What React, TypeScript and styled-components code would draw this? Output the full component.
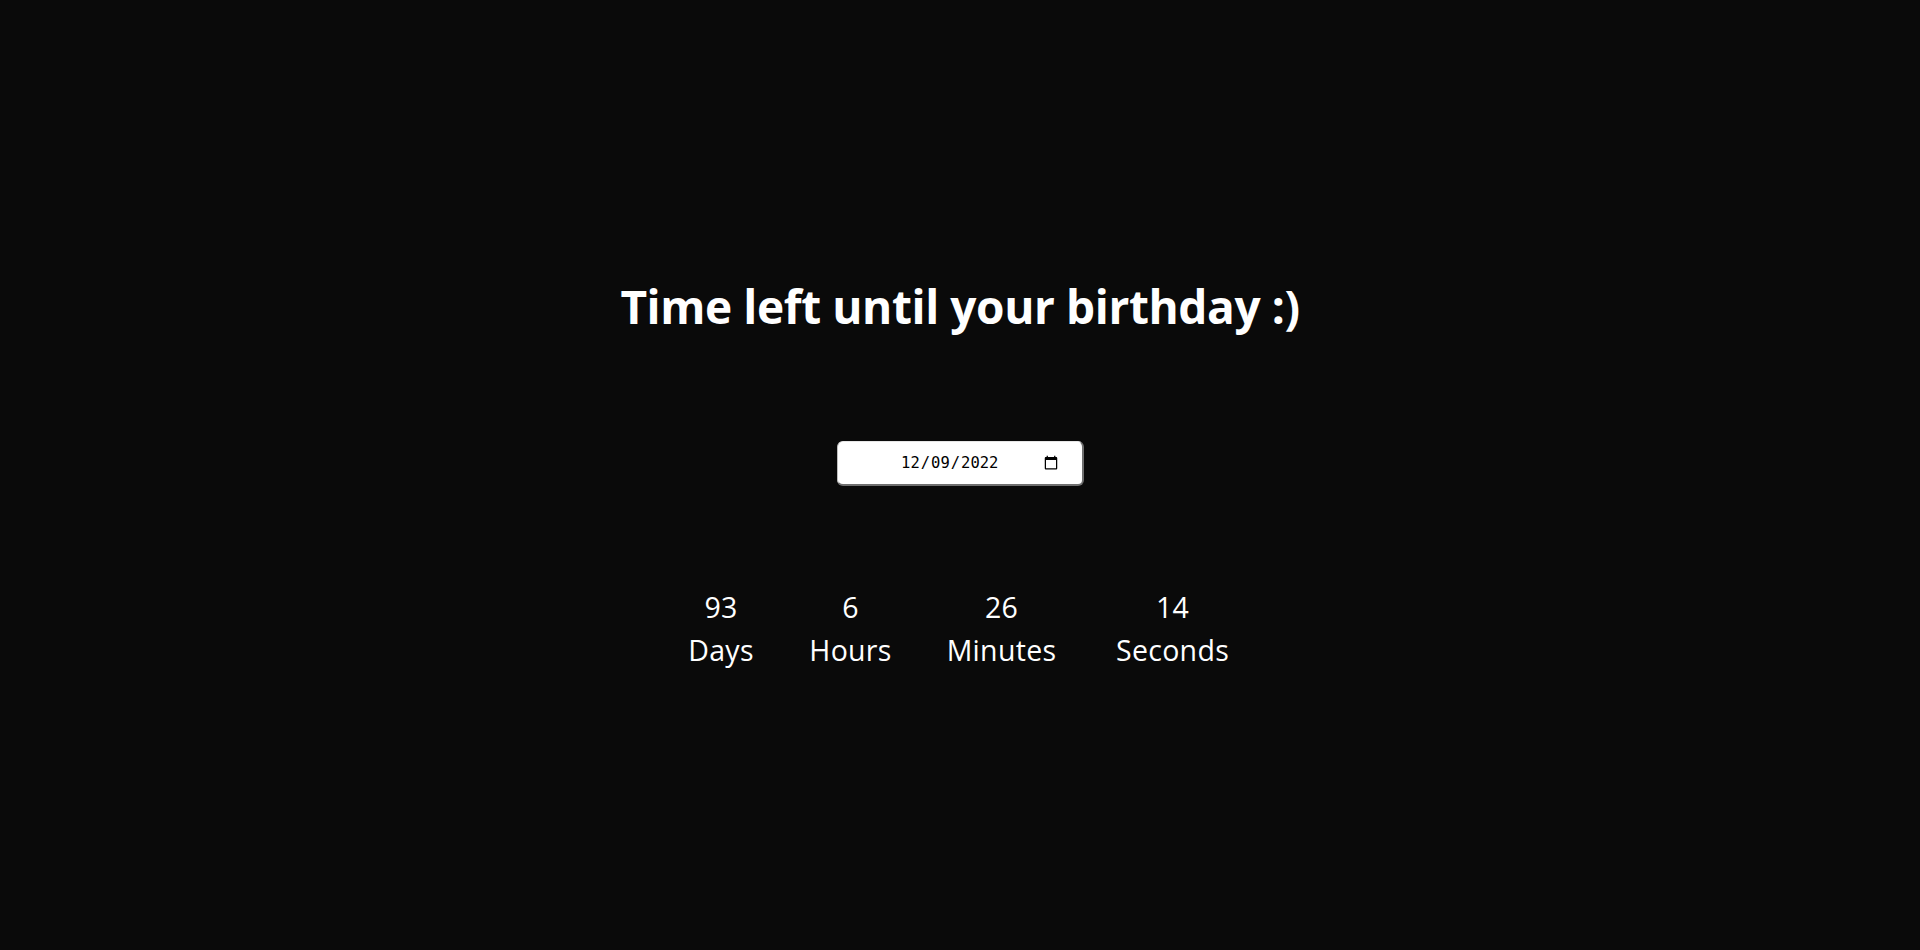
import React from "react";
import styled, { createGlobalStyle } from "styled-components";

const GlobalStyle = createGlobalStyle`
  html, body {
    margin: 0;
    padding: 0;
    background: #0a0a0a;
  }
  body {
    font-family: "Open Sans", "Noto Sans", sans-serif;
    color: #ffffff;
  }
`;

const Page = styled.main`
  min-height: 100vh;
  box-sizing: border-box;
  padding-bottom: 4px;
  display: flex;
  flex-direction: column;
  align-items: center;
  justify-content: center;
`;

const Title = styled.h1`
  margin: 0;
  font-family: "Open Sans", "Noto Sans", sans-serif;
  font-weight: 700;
  font-size: 46px;
  letter-spacing: -0.4px;
  line-height: 64px;
  color: #ffffff;
`;

const DateInput = styled.input`
  margin-top: 103px;
  box-sizing: border-box;
  width: 247px;
  height: 45px;
  padding: 0 21px;
  border-style: solid;
  border-width: 1px 2px 2px 1px;
  border-color: #e6e6e6 #6f6f6f #6f6f6f #bdbdbd;
  border-radius: 6px;
  background: #ffffff;
  color: #000000;
  font-family: "DejaVu Sans Mono", "Liberation Mono", monospace;
  font-size: 15.5px;
  text-align: center;
  outline: none;
`;

const Countdown = styled.div`
  margin-top: 100px;
  display: grid;
  grid-template-columns: 66px 79px 109px 119px;
  column-gap: 57px;
  justify-items: center;
`;

const Unit = styled.div`
  display: flex;
  flex-direction: column;
  align-items: center;
  font-family: "Open Sans", "Noto Sans", sans-serif;
  font-weight: 500;
  font-size: 28.5px;
  letter-spacing: 0.3px;
  line-height: 43px;
  color: #ffffff;
  white-space: nowrap;
`;

const Value = styled.span``;
const Label = styled.span``;

const units = [
  { value: 93, label: "Days" },
  { value: 6, label: "Hours" },
  { value: 26, label: "Minutes" },
  { value: 14, label: "Seconds" },
];

export default function App() {
  return (
    <>
      <GlobalStyle />
      <Page>
        <Title>Time left until your birthday :)</Title>
        <DateInput type="date" defaultValue="2022-12-09" />
        <Countdown>
          {units.map((u) => (
            <Unit key={u.label}>
              <Value>{u.value}</Value>
              <Label>{u.label}</Label>
            </Unit>
          ))}
        </Countdown>
      </Page>
    </>
  );
}
